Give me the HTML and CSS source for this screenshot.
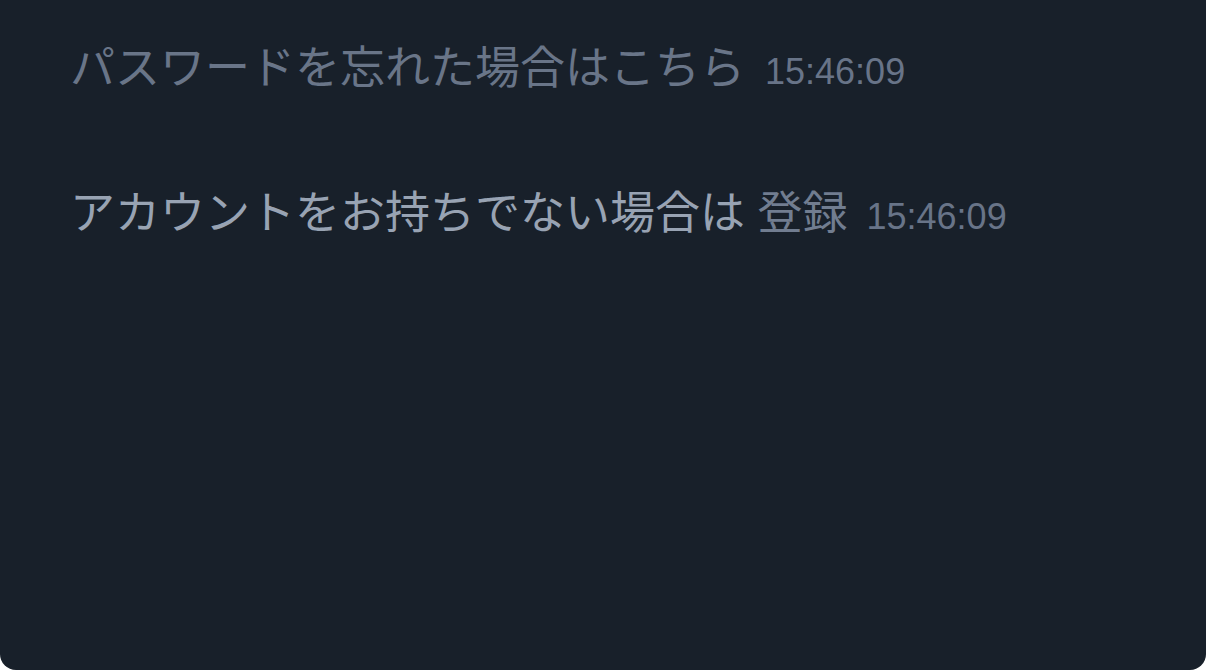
FILE: index.html
```html
<!DOCTYPE html>
<html lang="ja">
<head>
<meta charset="utf-8">
<link rel="stylesheet" href="styles.css">
</head>
<body>
<div class="panel">
  <div class="msg msg-muted">
    <span class="text">パスワードを忘れた場合はこちら</span><span class="time time-first">15:46:09</span>
  </div>
  <div class="msg msg-light">
    <span class="text">アカウントをお持ちでない場合は <span class="link">登録</span></span><span class="time">15:46:09</span>
  </div>
</div>
</body>
</html>
```

FILE: styles.css
```css
html, body {
  margin: 0;
  padding: 0;
  background: #ffffff;
}
body {
  width: 1206px;
  height: 670px;
  overflow: hidden;
}
.panel {
  box-sizing: border-box;
  width: 1206px;
  height: 670px;
  background: #18202a;
  border-radius: 0 0 16px 16px;
  padding: 37px 0 0 70px;
  display: flex;
  flex-direction: column;
  gap: 78px;
  font-family: "Liberation Sans", "Noto Sans CJK JP", sans-serif;
}
.msg {
  display: flex;
  align-items: baseline;
  line-height: 64px;
  white-space: nowrap;
}
.text {
  font-size: 45px;
}
.msg-muted .text {
  color: #697588;
}
.msg-light .text {
  color: #98a3b3;
}
.link {
  color: #717d90;
}
.time {
  font-size: 36px;
  color: #687488;
  margin-left: 19px;
}
.time-first {
  margin-left: 20px;
}
```
